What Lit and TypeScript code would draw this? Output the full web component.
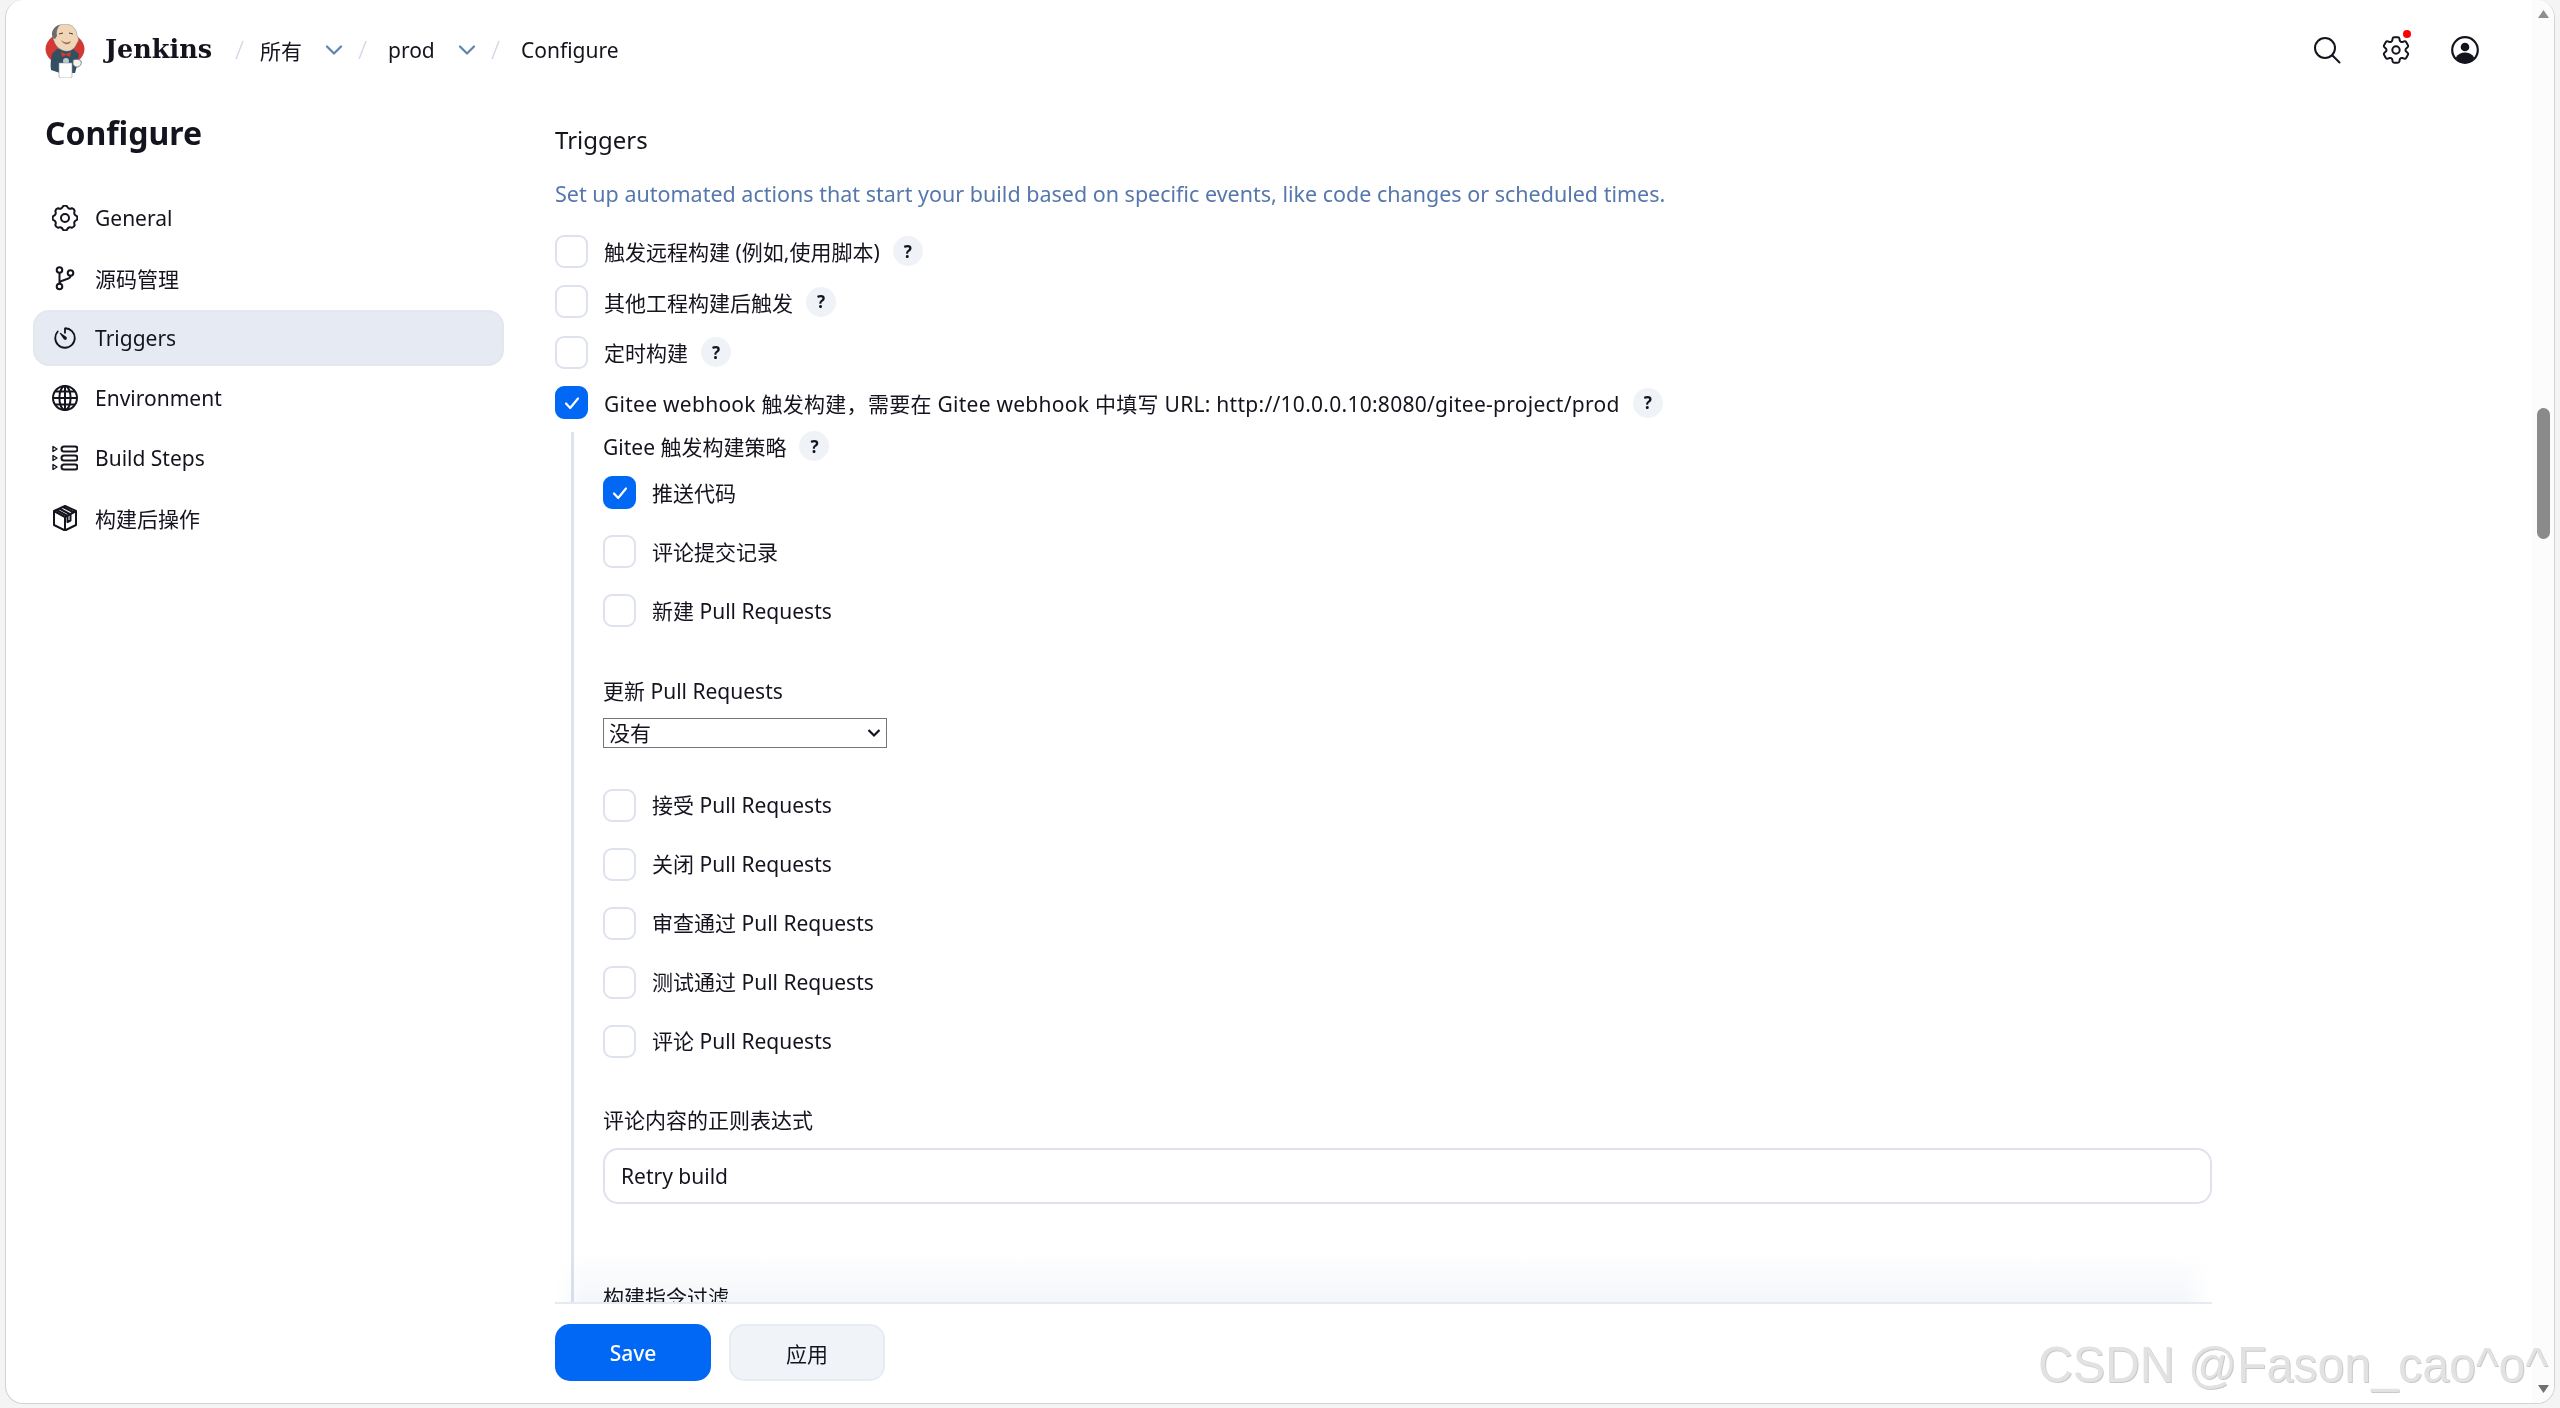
import { LitElement, html, css, svg } from "lit";
import { customElement } from "lit/decorators.js";

function gearPath(teeth: number, cx: number, cy: number, ro: number, ri: number) {
  const pts: string[] = [];
  const step = (Math.PI * 2) / teeth;
  for (let i = 0; i < teeth; i++) {
    const a = i * step - Math.PI / 2;
    const p = (ang: number, r: number) => `${(cx + Math.cos(ang) * r).toFixed(2)} ${(cy + Math.sin(ang) * r).toFixed(2)}`;
    const w = step * 0.2;
    const g = step * 0.5;
    pts.push(`${i === 0 ? "M" : "L"}${p(a - w, ro)}`);
    pts.push(`Q${p(a, ro + 1)} ${p(a + w, ro)}`);
    pts.push(`Q${p(a + g, ri - 0.6)} ${p(a + step - w, ro)}`);
  }
  return pts.join(" ") + "Z";
}

const icons = {
  gear: svg`<path d=${gearPath(8, 13, 13, 12, 9.4)} fill="none" stroke="currentColor" stroke-width="2" stroke-linejoin="round"/><circle cx="13" cy="13" r="4" fill="none" stroke="currentColor" stroke-width="2"/>`,
  branch: svg`<g fill="none" stroke="currentColor" stroke-width="2"><circle cx="7.5" cy="5" r="2.8"/><circle cx="18.5" cy="8" r="2.8"/><circle cx="7.5" cy="21.5" r="2.8"/><path d="M7.5 8v10.7M18.5 11c0 4.500-11 3-11 7.500"/></g>`,
  timer: svg`<g transform="scale(0.0508)"><path d="M112.91 128A191.85 191.85 0 0064 254c-1.18 106.35 85.65 193.8 192 194 106.2.2 192-85.83 192-192 0-104.54-83.55-189.61-187.5-192a4.36 4.36 0 00-4.5 4.37V152" fill="none" stroke="currentColor" stroke-width="36" stroke-linecap="round"/><path d="M233.38 278.63l-79-113a8.13 8.13 0 0111.32-11.32l113 79a32.5 32.5 0 01-37.25 53.26 33.21 33.21 0 01-8.07-7.94z" fill="currentColor"/></g>`,
  globe: svg`<g fill="none" stroke="currentColor" stroke-width="2"><circle cx="13" cy="13" r="12"/><ellipse cx="13" cy="13" rx="5.6" ry="12"/><path d="M13 1v24M1 13h24M3.200 6.500h19.600M3.200 19.500h19.600"/></g>`,
  steps: svg`<g fill="none" stroke="currentColor" stroke-width="2"><rect x="9.500" y="1.500" width="16" height="5" rx="2.500"/><rect x="9.500" y="10.500" width="16" height="5" rx="2.500"/><rect x="9.500" y="19.500" width="16" height="5" rx="2.500"/><path d="M1 1.500l4 2.500-4 2.500zM1 10.500l4 2.500-4 2.500zM1 19.500l4 2.500-4 2.500z" stroke-width="1.400" stroke-linejoin="round"/></g>`,
  box: svg`<g fill="none" stroke="currentColor" stroke-width="2" stroke-linejoin="round"><path d="M13 1l11 5v14l-11 5.500L2 20V6z"/><path d="M2 6l11 6 11-6M13 12v13.500"/><path d="M7.500 3.500l11 6v6l-3 1.500v-6l-11-6M11 2l11 5.500" /></g>`,
};

@customElement("app-root")
export class AppRoot extends LitElement {
  static styles = css`
    :host {
      display: block;
      width: 2560px;
      height: 1408px;
      background: #f4f4f4;
      font-family: "Noto Sans", "Noto Sans CJK SC", sans-serif;
      color: #14141f;
      overflow: hidden;
    }
    * { box-sizing: border-box; }
    .window {
      position: relative;
      width: 2550px;
      height: 1404px;
      margin-left: 5px;
      background: #fff;
      border: 1.5px solid #d3d3d3;
      border-top: none;
      border-radius: 18px;
      display: flex;
      flex-direction: column;
      overflow: hidden;
    }
    header {
      height: 100px;
      flex: none;
      display: flex;
      align-items: center;
      padding-left: 38px;
      font-size: 21px;
    }
    .logo { width: 41px; height: 54px; flex: none; margin-top: 2px; }
    .brand {
      font-family: "DejaVu Serif", serif;
      font-weight: 700;
      font-size: 25.5px;
      margin-left: 20px;
      width: 108px;
      white-space: nowrap;
      transform: translateY(-1px);
    }
    .crumbs { display: flex; align-items: center; margin-left: 22px; }
    .slash { color: #d0d9e8; font-size: 26px; width: 24px; font-weight: 300; transform: translateY(-1px); }
    .crumb { white-space: nowrap; }
    .chev { width: 18px; height: 12px; color: #5f82ae; flex: none; }
    .c1 { margin-left: 1px; width: 65px; }
    .c2 { width: 70px; margin-left: 6px; }
    .c3 { margin-left: 6px; }
    .chev-wrap { width: 33px; display: flex; }
    .actions { margin-left: auto; display: flex; align-items: center; margin-right: 76px; gap: 43px; }
    .act { position: relative; width: 26px; height: 28px; display: flex; align-items: center; justify-content: center; }
    .act svg { display: block; flex: none; }
    .dot { position: absolute; width: 8px; height: 8px; border-radius: 50%; background: #f00; top: -6px; right: -2px; }

    .body { flex: 1; min-height: 0; display: flex; }
    aside { width: 549px; flex: none; padding-left: 27px; }
    h1 {
      margin: 0 0 0 12px;
      font-size: 32px;
      line-height: 46px;
      font-weight: 700;
      color: #14141f;
      transform: translateY(10px);
    }
    nav { margin-top: 43.5px; width: 471px; display: flex; flex-direction: column; gap: 4px; }
    .nav-item {
      height: 56px;
      border-radius: 16px;
      display: flex;
      align-items: center;
      padding-left: 17px;
      gap: 17px;
      font-size: 21px;
      border: 2px solid transparent;
    }
    .nav-item.active { background: #e6eaf2; border-color: #e2e7f0; }
    .nav-item svg { width: 26px; height: 26px; flex: none; color: #14141f; }

    main { flex: 1; min-width: 0; display: flex; flex-direction: column; padding-right: 342px; }
    .content { flex: 1; min-height: 0; overflow: hidden; }
    h2 { margin: 22px 0 0; font-size: 24px; line-height: 36px; font-weight: 400; }
    .desc { margin: 21px 0 0; font-size: 21.5px; line-height: 30px; color: #5577ac; white-space: nowrap; }
    .list { margin-top: 25.5px; display: flex; flex-direction: column; gap: 17.6px; }
    .row { display: flex; align-items: center; height: 33px; font-size: 21px; white-space: nowrap; }
    .row.wide { letter-spacing: 0.27px; }
    .stack .row .txt { transform: translateY(-1px); }
    .cb {
      width: 33px;
      height: 33px;
      flex: none;
      border: 2.500px solid #dde2ee;
      border-radius: 9px;
      background: #fff;
      margin-right: 16px;
      display: flex;
      align-items: center;
      justify-content: center;
    }
    .cb.on { background: #0068f5; border-color: #0068f5; }
    .cb svg { width: 18px; height: 18px; }
    .help {
      width: 30px;
      height: 30px;
      flex: none;
      margin-left: 13px;
      border-radius: 50%;
      background: #eff2f6;
      font-size: 17px;
      font-weight: 700;
      display: flex;
      align-items: center;
      justify-content: center;
      letter-spacing: 0;
    }
    .nested {
      margin-top: 13px;
      margin-left: 16px;
      border-left: 3px solid #dde3ef;
      padding-left: 29px;
      height: 900px;
    }
    .strategy { height: 28px; display: flex; align-items: center; font-size: 21px; }
    .stack { margin-top: 16px; display: flex; flex-direction: column; gap: 26px; }
    .label { font-size: 21px; line-height: 28px; white-space: nowrap; }
    .l-update { margin-top: 49.5px; }
    .select-wrap { position: relative; margin-top: 13px; width: 284px; height: 30px; }
    select {
      display: block;
      appearance: none;
      width: 100%;
      height: 100%;
      font-family: inherit;
      font-size: 21px;
      color: #14141f;
      background: #fff;
      border: 1px solid #767676;
      border-radius: 0;
      padding: 0 0 0 5px;
    }
    .select-wrap svg { position: absolute; right: 6px; top: 10px; width: 14px; height: 10px; pointer-events: none; }
    .s2 { margin-top: 41px; }
    .l-regex { margin-top: 48.5px; }
    input {
      display: block;
      margin-top: 14px;
      width: 100%;
      height: 56px;
      border: 2.500px solid #dde2ee;
      border-radius: 15px;
      padding: 0 16px;
      font-family: inherit;
      font-size: 21px;
      color: #14141f;
      background: #fff;
      outline: none;
    }
    .l-filter { margin-top: 79px; }

    footer {
      position: relative;
      flex: none;
      height: 101px;
      border-top: 2px solid #e6eaf2;
      display: flex;
      gap: 18px;
      padding-top: 20px;
      background: #fff;
    }
    footer::before {
      content: "";
      position: absolute;
      left: 0;
      right: 0;
      top: -52px;
      height: 50px;
      background: linear-gradient(to bottom, rgba(243, 245, 249, 0), rgba(243, 245, 249, 0.9));
      mix-blend-mode: multiply;
      -webkit-mask-image: linear-gradient(to right, transparent, #000 30px, #000 calc(100% - 30px), transparent);
      mask-image: linear-gradient(to right, transparent, #000 30px, #000 calc(100% - 30px), transparent);
      pointer-events: none;
    }
    button {
      width: 156px;
      height: 57px;
      border-radius: 15px;
      font-family: inherit;
      font-size: 21px;
      font-weight: 500;
      padding: 0;
    }
    .save { background: #0068f5; color: #fff; border: none; }
    .apply { background: #f0f3f7; color: #14141f; border: 2px solid #e8ecf2; font-weight: 400; }

    .gutter {
      position: absolute;
      right: 0;
      top: 0;
      bottom: 0;
      width: 22px;
      background: #fcfcfc;
    }
    .thumb { position: absolute; left: 5px; top: 408px; width: 13px; height: 131px; border-radius: 7px; background: #8a8a8a; }
    .arrow { position: absolute; left: 6px; width: 11px; height: 8px; }
    .arrow.up { top: 10px; background: #8f8f8f; clip-path: polygon(50% 0, 100% 100%, 0 100%); }
    .arrow.down { top: 1385px; background: #707070; clip-path: polygon(0 0, 100% 0, 50% 100%); }
    .mark {
      position: absolute;
      left: 2032px;
      top: 1336px;
      font-family: "Liberation Sans", sans-serif;
      font-size: 50px;
      line-height: 58px;
      color: #e2e2e2;
      text-shadow: 1px 1px 0 #c9c9c9;
      white-space: nowrap;
      pointer-events: none;
      transform: scaleX(0.965);
      transform-origin: left center;
    }
  `;

  private check() {
    return html`<svg viewBox="0 0 18 18"><path d="M3 9.500l4.200 4.500L15 4.500" fill="none" stroke="#fff" stroke-width="2.200" stroke-linecap="round" stroke-linejoin="round"/></svg>`;
  }

  private row(text: string, on = false, help = false, wide = false) {
    return html`<div class="row ${wide ? "wide" : ""}"><span class="cb ${on ? "on" : ""}">${on ? this.check() : ""}</span><span class="txt">${text}</span>${help ? html`<span class="help">?</span>` : ""}</div>`;
  }

  private chev() {
    return html`<span class="chev-wrap"><svg class="chev" viewBox="0 0 18 12"><path d="M2 2.500l7 7 7-7" fill="none" stroke="currentColor" stroke-width="2.200" stroke-linecap="round" stroke-linejoin="round"/></svg></span>`;
  }

  private logo() {
    return html`<svg class="logo" viewBox="0 0 41 54">
      <ellipse cx="21" cy="25" rx="19.500" ry="16" fill="#d33833"/>
      <path d="M8 30c-1 5-2 10-1 16l9 3h15l2-7 2-12-6-5H13z" fill="#335061"/>
      <path d="M9 12C8 4 14 0 21 0c7 0 12 5 12 12 2 1 2 5 0 7-2 6-7 9-12 8-6-1-10-6-11-10-1-1-1-3-1-5z" fill="#f0d6b7" stroke="#49728b" stroke-width=".4"/>
      <path d="M9 14C6 8 10 2 16 1c-3 3-4 7-3 11l-2 3z" fill="#6d6b6d"/>
      <path d="M17 16c3 3 7 3 10 1-1 4-7 5-10-1z" fill="#a6705a"/>
      <path d="M15 10l4-1M25 9l4 1" stroke="#49392c" stroke-width="1"/>
      <path d="M17 28l5 2 5-2-1 5-4-2-4 2z" fill="#d33833"/>
      <circle cx="22" cy="37" r="3" fill="#bdc7cd"/>
      <path d="M15 39h13v14l-2 1h-9l-2-1z" fill="#fff" stroke="#8f9ca4" stroke-width=".6"/>
      <path d="M29 36c3-1 6-1 8 1 1 3-1 6-4 6-2 0-4-2-4-3z" fill="#f6f2ea" stroke="#5b6a72" stroke-width=".8"/>
    </svg>`;
  }

  render() {
    const nav: [string, any, boolean][] = [
      ["General", icons.gear, false],
      ["源码管理", icons.branch, false],
      ["Triggers", icons.timer, true],
      ["Environment", icons.globe, false],
      ["Build Steps", icons.steps, false],
      ["构建后操作", icons.box, false],
    ];
    return html`<div class="window">
      <header>
        ${this.logo()}
        <span class="brand">Jenkins</span>
        <div class="crumbs">
          <span class="slash">/</span>
          <span class="crumb c1">所有</span>${this.chev()}
          <span class="slash">/</span>
          <span class="crumb c2">prod</span>${this.chev()}
          <span class="slash">/</span>
          <span class="crumb c3">Configure</span>
        </div>
        <div class="actions">
          <span class="act"><svg width="28" height="28" viewBox="0 0 28 28" fill="none" stroke="#14141f" stroke-width="2"><circle cx="12" cy="12" r="10"/><path d="M19.500 19.500l7 7" stroke-linecap="round"/></svg></span>
          <span class="act"><svg width="34" height="34" viewBox="0 0 24 24" fill="none" stroke="#14141f" stroke-width="1.400"><path stroke-linejoin="round" d="M9.594 3.940c.09-.542.56-.94 1.110-.94h2.593c.55 0 1.020.398 1.110.94l.213 1.281c.063.374.313.686.645.870.074.040.147.083.22.127.325.196.72.257 1.075.124l1.217-.456a1.125 1.125 0 0 1 1.370.49l1.296 2.247a1.125 1.125 0 0 1-.26 1.431l-1.003.827c-.293.241-.438.613-.43.992a7.723 7.723 0 0 1 0 .255c-.008.378.137.75.43.991l1.004.827c.424.35.534.955.26 1.430l-1.298 2.247a1.125 1.125 0 0 1-1.369.491l-1.217-.456c-.355-.133-.75-.072-1.076.124a6.470 6.470 0 0 1-.22.128c-.331.183-.581.495-.644.869l-.213 1.281c-.09.543-.56.94-1.110.94h-2.594c-.55 0-1.019-.398-1.110-.94l-.213-1.281c-.062-.374-.312-.686-.644-.87a6.520 6.520 0 0 1-.22-.127c-.325-.196-.72-.257-1.076-.124l-1.217.456a1.125 1.125 0 0 1-1.369-.49l-1.297-2.247a1.125 1.125 0 0 1 .26-1.431l1.004-.827c.292-.24.437-.613.43-.991a6.932 6.932 0 0 1 0-.255c.007-.38-.138-.751-.43-.992l-1.004-.827a1.125 1.125 0 0 1-.26-1.430l1.297-2.247a1.125 1.125 0 0 1 1.370-.491l1.216.456c.356.133.751.072 1.076-.124.072-.044.146-.086.22-.128.332-.183.582-.495.644-.869l.214-1.280Z"/><circle cx="12" cy="12" r="2.600"/></svg><span class="dot"></span></span>
          <span class="act"><svg width="28" height="28" viewBox="0 0 28 28"><circle cx="14" cy="14" r="12.800" fill="#fff" stroke="#14141f" stroke-width="2.200"/><circle cx="14" cy="11" r="4.300" fill="#14141f"/><path d="M4.800 21.500c2-3.500 5.500-5 9.200-5s7.200 1.500 9.200 5A12.800 12.800 0 0114 26.800a12.800 12.800 0 01-9.200-5.300z" fill="#14141f"/></svg></span>
        </div>
      </header>
      <div class="body">
        <aside>
          <h1>Configure</h1>
          <nav>
            ${nav.map(([t, ic, on]) => html`<div class="nav-item ${on ? "active" : ""}"><svg viewBox="0 0 26 26">${ic}</svg><span>${t}</span></div>`)}
          </nav>
        </aside>
        <main>
          <div class="content">
            <h2>Triggers</h2>
            <p class="desc">Set up automated actions that start your build based on specific events, like code changes or scheduled times.</p>
            <div class="list">
              ${this.row("触发远程构建 (例如,使用脚本)", false, true)}
              ${this.row("其他工程构建后触发", false, true)}
              ${this.row("定时构建", false, true)}
              ${this.row("Gitee webhook 触发构建，需要在 Gitee webhook 中填写 URL: http://10.0.0.10:8080/gitee-project/prod", true, true, true)}
            </div>
            <div class="nested">
              <div class="strategy">Gitee 触发构建策略<span class="help">?</span></div>
              <div class="stack">
                ${this.row("推送代码", true)}
                ${this.row("评论提交记录")}
                ${this.row("新建 Pull Requests")}
              </div>
              <div class="label l-update">更新 Pull Requests</div>
              <div class="select-wrap">
                <select><option>没有</option></select>
                <svg viewBox="0 0 14 10"><path d="M1.500 2l5.500 5.500L12.500 2" fill="none" stroke="#14141f" stroke-width="2.200"/></svg>
              </div>
              <div class="stack s2">
                ${this.row("接受 Pull Requests")}
                ${this.row("关闭 Pull Requests")}
                ${this.row("审查通过 Pull Requests")}
                ${this.row("测试通过 Pull Requests")}
                ${this.row("评论 Pull Requests")}
              </div>
              <div class="label l-regex">评论内容的正则表达式</div>
              <input value="Retry build" />
              <div class="label l-filter">构建指令过滤</div>
            </div>
          </div>
          <footer>
            <button class="save">Save</button>
            <button class="apply">应用</button>
          </footer>
        </main>
      </div>
      <div class="gutter">
        <div class="arrow up"></div>
        <div class="thumb"></div>
        <div class="arrow down"></div>
      </div>
      <div class="mark">CSDN @Fason_cao^o^</div>
    </div>`;
  }
}
